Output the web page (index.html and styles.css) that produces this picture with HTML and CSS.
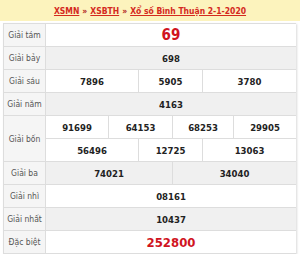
FILE: index.html
```html
<!DOCTYPE html>
<html lang="vi">
<head>
<meta charset="utf-8">
<link rel="stylesheet" href="styles.css">
</head>
<body>
<div class="head">
  <a class="lnk">XSMN</a> <span class="sep">»</span> <a class="lnk">XSBTH</a> <span class="sep">»</span> <a class="lnk">Xổ số Bình Thuận 2-1-2020</a>
</div>
<div class="tbl">
  <div class="lbl">Giải tám</div>
  <div class="v s6 big">69</div>

  <div class="lbl">Giải bảy</div>
  <div class="v s6 alt">698</div>

  <div class="lbl">Giải sáu</div>
  <div class="v s2">7896</div>
  <div class="v s2">5905</div>
  <div class="v s2">3780</div>

  <div class="lbl">Giải năm</div>
  <div class="v s6 alt">4163</div>

  <div class="lbl r2">Giải bốn</div>
  <div class="v">91699</div>
  <div class="v s2">64153</div>
  <div class="v s2">68253</div>
  <div class="v">29905</div>
  <div class="v s2">56496</div>
  <div class="v s2">12725</div>
  <div class="v s2">13063</div>

  <div class="lbl">Giải ba</div>
  <div class="v s3 alt">74021</div>
  <div class="v s3 alt">34040</div>

  <div class="lbl">Giải nhì</div>
  <div class="v s6">08161</div>

  <div class="lbl">Giải nhất</div>
  <div class="v s6 alt">10437</div>

  <div class="lbl">Đặc biệt</div>
  <div class="v s6 db">252800</div>
</div>
</body>
</html>
```
FILE: styles.css
```css
html, body {
  margin: 0;
  padding: 0;
  background: #ffffff;
  font-family: "DejaVu Sans Condensed", "DejaVu Sans", sans-serif;
}
.head {
  height: 21px;
  background: #fcf3bd;
  display: flex;
  align-items: center;
  justify-content: center;
  gap: 3px;
  font-size: 8.5px;
  font-weight: bold;
  color: #d42a1e;
  white-space: pre;
}
.lnk {
  text-decoration: underline;
  color: #d42a1e;
}
.sep {
  color: #b0201a;
}
.tbl {
  margin: 2px 4px 0 3px;
  display: grid;
  grid-template-columns: 41px 62px 29px 33px 29px 30px 62px;
  grid-auto-rows: 22px;
  gap: 1px;
  background: #dddddd;
  border: 1px solid #dddddd;
  box-shadow: 1px 1px 2px rgba(0,0,0,0.15);
}
.lbl {
  background: #f5f5f5;
  color: #555555;
  font-size: 8.5px;
  display: flex;
  align-items: center;
  justify-content: center;
}
.r2 { grid-row: span 2; }
.v {
  background: #ffffff;
  color: #222222;
  font-weight: bold;
  font-size: 9.5px;
  display: flex;
  align-items: center;
  justify-content: center;
}
.alt { background: #f0f0f0; }
.s2 { grid-column: span 2; }
.s3 { grid-column: span 3; }
.s6 { grid-column: span 6; }
.big {
  color: #d0141e;
  font-size: 15px;
}
.db {
  color: #d0141e;
  font-size: 13px;
}
```
